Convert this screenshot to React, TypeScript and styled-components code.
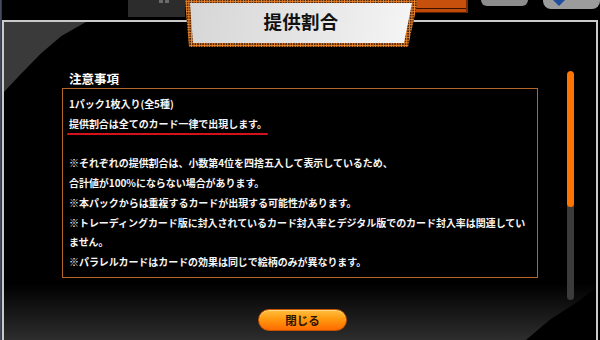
import React from "react";
import styled, { createGlobalStyle } from "styled-components";

const Global = createGlobalStyle`
  html, body { margin: 0; padding: 0; background: #000; }
  body { font-family: "Noto Sans CJK JP", "Noto Sans", sans-serif; }
`;

const Screen = styled.div`
  position: relative;
  width: 600px;
  height: 340px;
  overflow: hidden;
  background: linear-gradient(to right, #4b5466 0, #2a3040 2px, #000 2px);
`;

const TopStrip = styled.div`
  display: flex;
  align-items: flex-start;
  height: 20px;
`;

const GrayBlock = styled.div`
  margin-left: 128px;
  width: 60px;
  height: 17px;
  background:
    linear-gradient(#6a6a6a, #6a6a6a) 31px 0 / 4px 3px no-repeat,
    linear-gradient(#6a6a6a, #6a6a6a) 37px 0 / 4px 3px no-repeat,
    #2c2c2c;
`;

const OrangeBlock = styled.div`
  margin-left: 192px;
  width: 95px;
  height: 13px;
  background: linear-gradient(
    #c7500d 0 8px,
    #3a1000 8px 9px,
    #bf4a0a 9px 12px,
    #5a1e00 12px
  );
  border-right: 2px solid #7a2a00;
`;

const Pill = styled.div<{ $w: number; $h: number; $ml: number; $c: string }>`
  margin-left: ${(p) => p.$ml}px;
  width: ${(p) => p.$w}px;
  height: ${(p) => p.$h}px;
  background: ${(p) => p.$c};
  border-radius: 0 0 8px 8px;
  display: flex;
  padding-left: 10px;
  box-sizing: border-box;
`;

const Modal = styled.div`
  position: absolute;
  top: 20px;
  left: 2px;
  right: 2px;
  bottom: 0;
  border: 2px solid #cacaca;
  border-bottom: none;
  padding-top: 48px;
  background: linear-gradient(to bottom, #000 0, #000 262px, #2d2d2d 318px);
  &::before {
    content: "";
    position: absolute;
    top: 0;
    left: 0;
    width: 82px;
    height: 70px;
    background: #3a3a3a;
    clip-path: polygon(0 0, 100% 0, 70% 20%, 45% 45%, 20% 75%, 0 100%);
  }
  &::after {
    content: "";
    position: absolute;
    right: 0;
    bottom: 0;
    width: 70px;
    height: 52px;
    background: #000;
    clip-path: polygon(100% 0, 100% 100%, 0 100%, 35% 60%, 70% 30%);
  }
`;

const Body = styled.div`
  display: flex;
  align-items: flex-start;
  gap: 29px;
  padding-left: 58px;
`;

const Column = styled.div`
  width: 476px;
`;

const Heading = styled.h2`
  margin: 0;
  padding-left: 7px;
  font-size: 12.5px;
  line-height: 18px;
  font-weight: 700;
  color: #fff;
`;

const NoticeBox = styled.div`
  border: 1px solid #b5662b;
  padding: 5px 6px;
`;

const Line = styled.div`
  font-size: 10px;
  line-height: 19.75px;
  height: 19.75px;
  font-weight: 700;
  color: #f6f6f6;
  white-space: nowrap;
  letter-spacing: -0.05px;
`;

const Emph = styled.span`
  position: relative;
  &::after {
    content: "";
    position: absolute;
    left: -2px;
    right: -1px;
    bottom: -4px;
    height: 2px;
    border-radius: 1px;
    background: #d3121b;
  }
`;

const Track = styled.div`
  margin-top: 1px;
  width: 7px;
  height: 229px;
  border-radius: 4px;
  background: #3b3b3b;
  overflow: hidden;
`;

const Thumb = styled.div`
  height: 136px;
  border-radius: 4px;
  background: #ff7300;
`;

const Footer = styled.div`
  display: flex;
  justify-content: center;
  margin-top: 9px;
  padding-left: 5px;
`;

const CloseButton = styled.button`
  width: 89px;
  height: 22px;
  border-radius: 11px;
  border: 1px solid #c25400;
  padding: 0;
  background: linear-gradient(to bottom, #ffbf40 0%, #ff9a10 45%, #ff6a00 100%);
  font-family: inherit;
  font-size: 11.5px;
  font-weight: 700;
  color: #2a1400;
  line-height: 20px;
  box-shadow: inset 0 1px 0 rgba(255, 230, 160, 0.7);
`;

const TitleTab = styled.div`
  position: absolute;
  top: 0;
  left: 185px;
  width: 233px;
  height: 47px;
  box-sizing: border-box;
  padding: 3px 6px 4px 5px;
  display: flex;
  background:
    radial-gradient(circle, #f0862a 0.9px, transparent 1.3px) 0 0 / 2.6px 2.6px,
    #2a1204;
  clip-path: polygon(0 0, 100% 0, calc(100% - 10px) 100%, 4px 100%);
`;

const TitleFace = styled.div`
  flex: 1;
  display: flex;
  align-items: center;
  justify-content: center;
  padding-bottom: 4px;
  background: linear-gradient(100deg, #d6d6d6 0%, #e6e6e6 55%, #f5f5f5 100%);
  clip-path: polygon(0 0, 100% 0, calc(100% - 8px) 100%, 3px 100%);
  font-size: 18.5px;
  font-weight: 700;
  color: #111;
  letter-spacing: 0.2px;
`;

const lines: React.ReactNode[] = [
  "1パック1枚入り(全5種)",
  <Emph key="e">提供割合は全てのカード一律で出現します。</Emph>,
  "",
  "※それぞれの提供割合は、小数第4位を四捨五入して表示しているため、",
  "合計値が100%にならない場合があります。",
  "※本パックからは重複するカードが出現する可能性があります。",
  "※トレーディングカード版に封入されているカード封入率とデジタル版でのカード封入率は関連してい",
  "ません。",
  "※パラレルカードはカードの効果は同じで絵柄のみが異なります。",
];

export default function App() {
  return (
    <>
      <Global />
      <Screen>
        <TopStrip>
          <GrayBlock />
          <OrangeBlock />
          <Pill $ml={13} $w={49} $h={6} $c="#8c8c8c" />
          <Pill $ml={15} $w={60} $h={9} $c="#9c9c9c">
            <svg width="12" height="6" viewBox="0 0 12 6">
              <path d="M0 0 H12 L6 6 Z" fill="#1f4f9e" />
            </svg>
          </Pill>
        </TopStrip>
        <Modal>
          <Body>
            <Column>
              <Heading>注意事項</Heading>
              <NoticeBox>
                {lines.map((l, i) => (
                  <Line key={i}>{l}</Line>
                ))}
              </NoticeBox>
            </Column>
            <Track>
              <Thumb />
            </Track>
          </Body>
          <Footer>
            <CloseButton>閉じる</CloseButton>
          </Footer>
        </Modal>
        <TitleTab>
          <TitleFace>提供割合</TitleFace>
        </TitleTab>
      </Screen>
    </>
  );
}
